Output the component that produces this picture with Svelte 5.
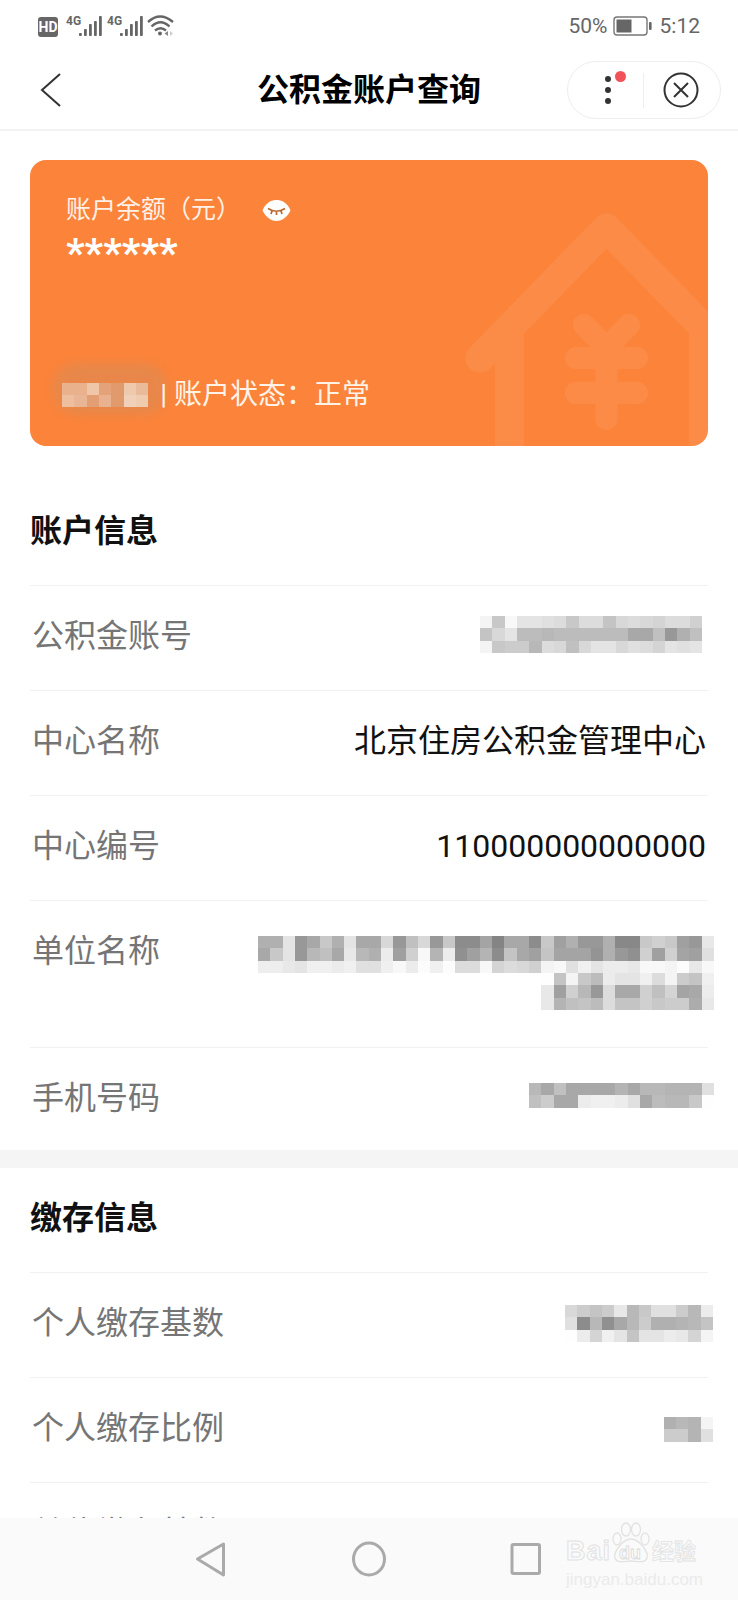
<script>
  // mosaics are the blurred-out values from the screenshot: one string per row of cells
  const account = [
    'f4 c8 f8 e4 e4 e0 dc c8 dc dc c4 d8 dc d8 d4 dc dc d0',
    'c4 d8 e4 bc bc b8 bc bc bc bc bc bc a8 a8 c0 98 b0 c0',
    'f4 c8 cc cc b8 dc d8 c0 d8 e4 e4 d8 e0 dc d4 e4 e0 e4'
  ];
  const company = [
    'b0 b0 e4 98 a8 c8 b0 e4 a8 a8 d8 98 c0 d8 98 c8 8c 8c a4 84 a8 a8 8c c8 a0 b0 98 98 b0 88 88 c8 d0 c8 a0 98 e8',
    'a8 c8 e4 98 b8 c0 a8 e8 b8 b0 ec a0 d0 f8 b4 ec 90 a0 b4 8c c4 a8 a0 c4 a4 a4 a4 94 b0 98 90 d0 a0 d0 a4 a0 e0',
    'ee ee e8 e4 f0 f0 ec f0 e0 e0 f0 f8 ec fc f0 fc dc dc f8 d4 dc d8 d0 f4 f8 e0 f0 e4 ec ec e8 f8 f8 f4 fc e8 f8'
  ];
  const companyTail = [
    'fe c4 f4 c8 bc ec e4 e4 f0 dc f4 cc c4 f0',
    'e8 a0 d0 b8 98 dc a8 a8 d0 c0 d4 a4 a8 ec',
    'e8 b4 c0 c4 bc dc c4 c4 d0 c8 cc cc ac e8'
  ];
  const phone = [
    'b8 a8 c0 a8 a8 a8 a8 b4 a8 b8 b8 b4 b4 b4 e0',
    'c0 cc a8 a8 ec f0 f0 ec e0 a8 bc b8 b8 c8 fe'
  ];
  const base = [
    'd8 cc c4 cc e8 b8 c8 e0 e0 cc b8 ec',
    'e0 8c b8 90 a8 b8 cc b0 b0 b4 b8 c4',
    'fe ec d4 f0 e4 c4 e4 e4 ec e8 d4 f4'
  ];
  const ratio = ['b0 b8 b4 f4', 'cc cc b4 e0'];
  const owner = [
    'e9b18c e9b18c efc6a8 e3a278 e09a6c efc9ad e9bb9b',
    'edbf9f e9b594 e39e74 e9b18e e09a6c f0d0b8 efcbb0'
  ];

  const cellColor = (v) => (v.length === 2 ? '#' + v + v + v : '#' + v);
  const bars = [
    [0, 3],
    [5, 7],
    [10, 12],
    [15, 15],
    [20, 20]
  ];
</script>

{#snippet mosaic(rows)}
  <div class="mosaic" style="grid-template-columns: repeat({rows[0].split(' ').length}, 12.33px)">
    {#each rows as row}
      {#each row.split(' ') as cell}
        <i style="background: {cellColor(cell)}"></i>
      {/each}
    {/each}
  </div>
{/snippet}

{#snippet signal(x)}
  <text class="net" x={x} y="24">4G</text>
  {#each bars as [dx, h]}
    <rect x={x + 13 + dx} y={35 - h} width="2.8" height={h} rx="0.8" fill="#666" />
  {/each}
{/snippet}

<div class="page">
  <div class="status">
    <svg class="status-icons" width="150" height="40" viewBox="30 5 150 40">
      <rect x="38" y="16" width="20" height="20" rx="3" fill="#666" />
      <text class="hd" x="48" y="31" text-anchor="middle">HD</text>
      {@render signal(66)}
      {@render signal(107)}
      <g fill="none" stroke="#666" stroke-width="2.4">
        <path d="M148 21 Q160 10 173 21" />
        <path d="M151.5 25.5 Q160.5 17 169.5 25.5" />
        <path d="M155 29.5 Q160.5 25 166 29.5" />
      </g>
      <circle cx="160" cy="32.5" r="2" fill="#666" />
      <path d="M168 30 L164.5 32.5 L168 35 Z" fill="#888" />
      <path d="M170 30 L173 32.5 L170 35 Z" fill="#ccc" />
    </svg>
    <div class="status-right">
      <span class="pct">50%</span>
      <svg width="39" height="20" viewBox="0 0 39 20">
        <rect x="1" y="1" width="33" height="18" rx="3" fill="none" stroke="#777" stroke-width="1.4" />
        <rect x="3.5" y="3.5" width="15" height="13" fill="#666" />
        <rect x="36" y="6" width="2.6" height="8" rx="1" fill="#666" />
      </svg>
      <span>5:12</span>
    </div>
  </div>

  <header>
    <svg class="back" width="22" height="36" viewBox="0 0 22 36">
      <path d="M20 2 L2 18 L20 34" fill="none" stroke="#333" stroke-width="2" />
    </svg>
    <h1>公积金账户查询</h1>
    <div class="capsule">
      <div class="more">
        <span></span><span></span><span></span>
        <em></em>
      </div>
      <div class="sep"></div>
      <svg width="36" height="36" viewBox="0 0 36 36" class="close">
        <circle cx="18" cy="18" r="16.5" fill="none" stroke="#333" stroke-width="2" />
        <path d="M11 11 L25 25 M25 11 L11 25" fill="none" stroke="#333" stroke-width="2" />
      </svg>
    </div>
  </header>

  <section class="card">
    <svg class="house" width="678" height="286" viewBox="30 160 678 286">
      <g opacity="0.07" fill="none" stroke="#fff" stroke-linecap="round" stroke-linejoin="round">
        <path stroke-width="29" d="M480 358 L606.5 228 L733 358" />
        <path stroke-width="29" stroke-linecap="butt" d="M509.5 335 V446 M703.5 335 V446" />
        <path stroke-width="22" d="M584 325 L606.5 348 L629 325 M576 358 H637 M576 393 H637 M606.5 348 V419" />
      </g>
    </svg>
    <div class="card-top">
      <div class="balance-label">
        <span>账户余额（元）</span>
        <svg width="29" height="21" viewBox="0 0 29 21">
          <path d="M0.5 10.5 C4 2 10 0 14.5 0 C19 0 25 2 28.5 10.5 C25 18 19 21 14.5 21 C10 21 4 18 0.5 10.5 Z" fill="#fff" />
          <path d="M6 8.5 Q14.5 14 23 8.5 M10 11 L9 14 M14.5 12 V15 M19 11 L20 14" fill="none" stroke="#b9682f" stroke-width="1.7" />
        </svg>
      </div>
      <div class="stars">******</div>
    </div>
    <div class="card-bottom">
      <div class="smudge"></div>
      {@render mosaic(owner)}
      <span class="state">| 账户状态：正常</span>
    </div>
  </section>

  <h2 class="first">账户信息</h2>
  <div class="row">
    <span class="label">公积金账号</span>
    <div class="shift">{@render mosaic(account)}</div>
  </div>
  <div class="row">
    <span class="label">中心名称</span>
    <span class="value">北京住房公积金管理中心</span>
  </div>
  <div class="row">
    <span class="label">中心编号</span>
    <span class="value">110000000000000</span>
  </div>
  <div class="row tall">
    <span class="label">单位名称</span>
    <div class="stack">
      {@render mosaic(company)}
      {@render mosaic(companyTail)}
    </div>
  </div>
  <div class="row last">
    <span class="label">手机号码</span>
    <div class="phone">{@render mosaic(phone)}</div>
  </div>

  <div class="band"></div>

  <h2>缴存信息</h2>
  <div class="row">
    <span class="label">个人缴存基数</span>
    <div class="base">{@render mosaic(base)}</div>
  </div>
  <div class="row">
    <span class="label">个人缴存比例</span>
    <div class="ratio">{@render mosaic(ratio)}</div>
  </div>
  <div class="row">
    <span class="label">单位缴存基数</span>
  </div>

  <nav>
    <svg width="738" height="82" viewBox="0 1518 738 82">
      <g fill="none" stroke="#aaa" stroke-width="3" stroke-linejoin="round">
        <path d="M223.5 1544 L197.5 1559 L223.5 1575 Z" />
        <ellipse cx="369" cy="1559" rx="15.5" ry="16" />
        <rect x="512" y="1544.5" width="27.5" height="29" rx="1.5" />
      </g>
    </svg>
    <div class="mark">
      <div class="mark-top">
        <span class="bai">Bai</span>
        <div class="paw">
          <svg width="44" height="44" viewBox="0 0 44 44">
            <g fill="none" stroke="#e2e2e2" stroke-width="1.3">
              <ellipse cx="8" cy="17" rx="4" ry="6" />
              <ellipse cx="17" cy="7.5" rx="4.5" ry="6.5" />
              <ellipse cx="27" cy="7.5" rx="4.5" ry="6.5" />
              <ellipse cx="36" cy="17" rx="4" ry="6" />
              <path d="M22 17 C14 17 4 30 6 36 C8 42 17 39 22 39 C27 39 36 42 38 36 C40 30 30 17 22 17 Z" />
            </g>
          </svg>
          <span>du</span>
        </div>
        <span class="jy">经验</span>
      </div>
      <div class="site">jingyan.baidu.com</div>
    </div>
  </nav>
</div>

<style>
  :global(body) {
    margin: 0;
    background: #fff;
  }

  .page {
    position: relative;
    width: 738px;
    height: 1600px;
    overflow: hidden;
    background: #fff;
    font-family: Roboto, "Noto Sans CJK SC", sans-serif;
    color: #111;
  }

  .mosaic {
    display: grid;
    grid-auto-rows: 12.33px;
  }
  .mosaic i {
    display: block;
  }

  /* status bar */
  .status {
    height: 51px;
    display: flex;
    justify-content: space-between;
    align-items: center;
    padding-right: 38px;
  }
  .status-icons {
    margin-left: 30px;
    margin-top: 1px;
    display: block;
  }
  .net {
    font: 700 12px Roboto, sans-serif;
    fill: #666;
  }
  .hd {
    font: 700 14px Roboto, sans-serif;
    fill: #fff;
  }
  .status-right {
    display: flex;
    align-items: center;
    gap: 8px;
    color: #666;
    font-size: 21px;
    margin-top: 1px;
  }
  .pct {
    margin-right: -3px;
  }

  /* title bar */
  header {
    height: 78px;
    border-bottom: 2px solid #f3f3f3;
    display: grid;
    grid-template-columns: 1fr auto 1fr;
    align-items: center;
  }
  .back {
    margin-left: 40px;
  }
  h1 {
    margin: 0;
    font-size: 32px;
    line-height: 44px;
    font-weight: 700;
    color: #000;
  }
  .capsule {
    justify-self: end;
    margin-right: 17px;
    width: 154px;
    height: 58px;
    box-sizing: border-box;
    border: 1px solid #eee;
    border-radius: 29px;
    display: flex;
    align-items: center;
  }
  .more {
    position: relative;
    box-sizing: border-box;
    width: 75px;
    padding-left: 5px;
    display: flex;
    flex-direction: column;
    align-items: center;
    gap: 5px;
  }
  .more span {
    width: 6px;
    height: 6px;
    border-radius: 50%;
    background: #333;
  }
  .more em {
    position: absolute;
    left: 47px;
    top: -5px;
    width: 11px;
    height: 11px;
    border-radius: 50%;
    background: #f2525a;
  }
  .sep {
    width: 1px;
    height: 35px;
    background: #eee;
  }
  .close {
    margin-left: 19px;
  }

  /* orange card */
  .card {
    position: relative;
    margin: 29px 30px 0;
    height: 286px;
    box-sizing: border-box;
    border-radius: 16px;
    background: #fb833a;
    overflow: hidden;
    padding: 32px 36px 31px;
    display: flex;
    flex-direction: column;
    justify-content: space-between;
    color: #fff;
  }
  .house {
    position: absolute;
    left: 0;
    top: 0;
  }
  .card-top,
  .card-bottom {
    position: relative;
  }
  .balance-label {
    display: flex;
    align-items: center;
    gap: 21px;
    font-size: 25px;
    line-height: 36px;
    color: #fff1e6;
  }
  .stars {
    font-size: 41px;
    font-weight: 700;
    line-height: 40px;
    height: 34px;
    margin-top: 5px;
    color: #fff;
  }
  .card-bottom {
    display: flex;
    align-items: center;
    margin-left: -4px;
    height: 40px;
  }
  .smudge {
    position: absolute;
    left: -10px;
    top: -12px;
    width: 116px;
    height: 52px;
    border-radius: 26px;
    background: #e08a50;
    filter: blur(4px);
    opacity: 0.7;
  }
  .card-bottom .mosaic {
    position: relative;
  }
  .state {
    position: relative;
    margin-left: 12px;
    font-size: 28px;
    line-height: 40px;
    color: #fff3e8;
    white-space: nowrap;
  }

  /* info list */
  h2 {
    margin: 0;
    padding: 28px 30px 32px;
    font-size: 32px;
    line-height: 44px;
    font-weight: 700;
    color: #111;
  }
  h2.first {
    padding-top: 63px;
  }
  .row {
    margin: 0 30px;
    padding: 28px 2px 32px;
    border-top: 1px solid #f1f1f1;
    display: flex;
    justify-content: space-between;
    align-items: flex-start;
    font-size: 32px;
    line-height: 44px;
  }
  .row.tall {
    height: 86px;
  }
  .row.last {
    padding-bottom: 30px;
  }
  .label {
    color: #757575;
  }
  .value {
    color: #111;
  }
  .shift {
    margin-right: 4px;
    margin-top: 2px;
  }
  .base {
    margin-right: -7px;
    margin-top: 4px;
  }
  .ratio {
    margin-right: -7px;
    margin-top: 11px;
  }
  .stack {
    margin-right: -8px;
    margin-top: 7px;
    display: flex;
    flex-direction: column;
    align-items: flex-end;
  }
  .phone {
    margin-top: 7px;
    margin-right: -8px;
  }
  .band {
    height: 18px;
    background: #f5f5f5;
  }

  /* system nav drawn over the list */
  nav {
    position: absolute;
    left: 0;
    right: 0;
    bottom: 0;
    height: 82px;
    background: #fafafa;
  }
  nav > svg {
    display: block;
  }
  .mark {
    position: absolute;
    left: 566px;
    top: 4px;
    width: 134px;
    color: #fafafa;
  }
  .mark-top {
    display: flex;
    align-items: flex-end;
    height: 44px;
  }
  .bai {
    font: 700 27px/26px "Liberation Sans", sans-serif;
    -webkit-text-stroke: 1px #e2e2e2;
    width: 43px;
    letter-spacing: 1px;
    margin-bottom: 2px;
  }
  .paw {
    position: relative;
    width: 44px;
    height: 44px;
  }
  .paw svg {
    display: block;
  }
  .paw span {
    position: absolute;
    left: 10px;
    bottom: 4px;
    font: 700 18px/18px "Liberation Sans", sans-serif;
    -webkit-text-stroke: 0.8px #dadada;
  }
  .jy {
    font: 700 22px/24px "Noto Sans CJK SC", sans-serif;
    -webkit-text-stroke: 0.8px #e2e2e2;
    white-space: nowrap;
    margin-left: -1px;
    margin-bottom: 5px;
  }
  .site {
    margin-top: 4px;
    font: 400 17px/20px "Liberation Sans", sans-serif;
    color: #ebebeb;
    white-space: nowrap;
  }
</style>
